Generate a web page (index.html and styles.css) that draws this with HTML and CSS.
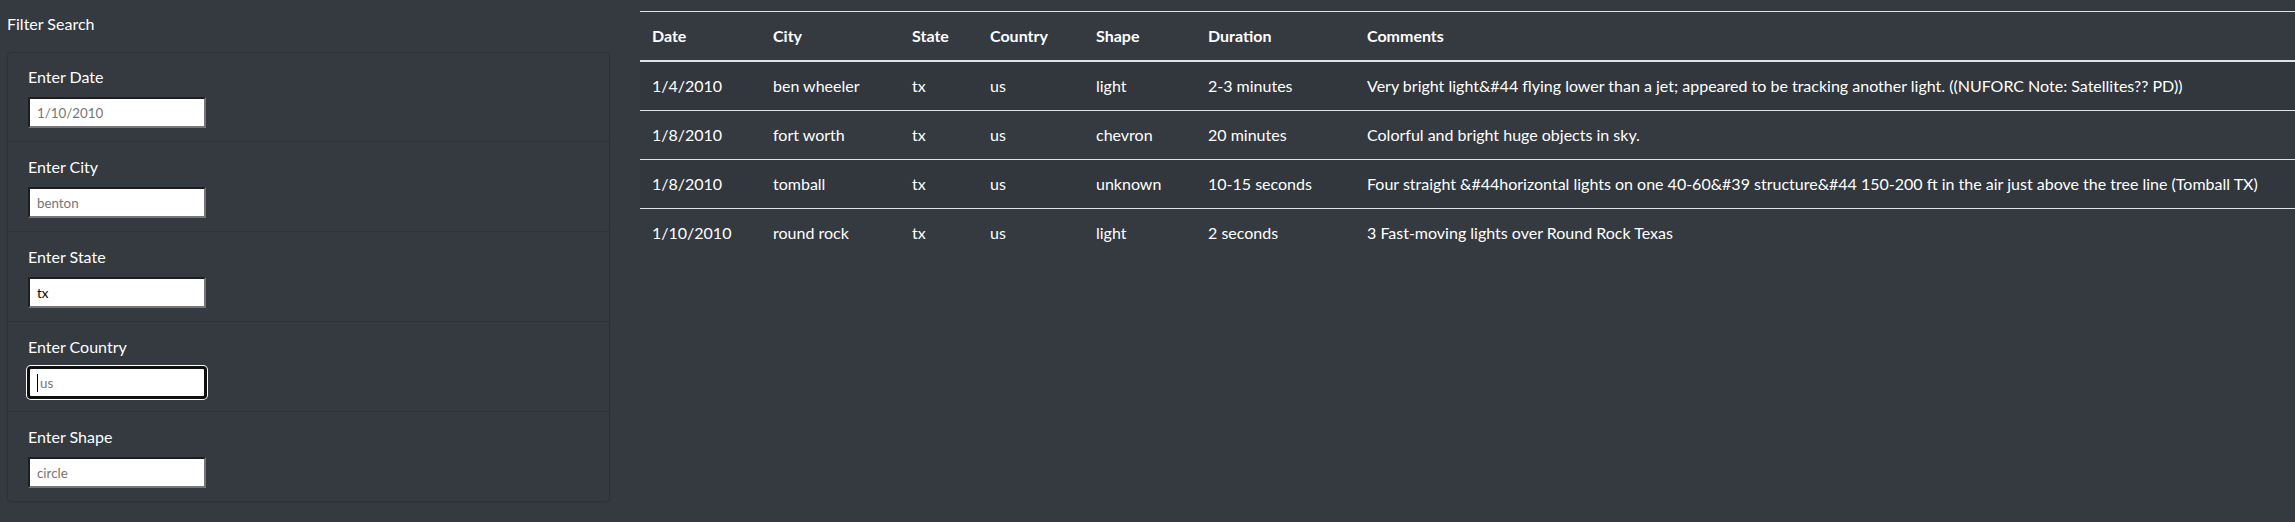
FILE: index.html
```html
<!DOCTYPE html>
<html lang="en">
<head>
<meta charset="utf-8">
<title>UFO Sightings</title>
<link rel="stylesheet" href="styles.css">
</head>
<body>
<div class="page">
  <aside class="filters">
    <div class="filters-title">Filter Search</div>
    <div class="card">
      <ul class="filter-list">
        <li class="filter-item">
          <label class="filter-label" for="datetime">Enter Date</label>
          <input class="filter-input" id="datetime" type="text" placeholder="1/10/2010">
        </li>
        <li class="filter-item">
          <label class="filter-label" for="city">Enter City</label>
          <input class="filter-input" id="city" type="text" placeholder="benton">
        </li>
        <li class="filter-item">
          <label class="filter-label" for="state">Enter State</label>
          <input class="filter-input" id="state" type="text" placeholder="ca" value="tx">
        </li>
        <li class="filter-item">
          <label class="filter-label" for="country">Enter Country</label>
          <span class="input-wrap">
            <input class="filter-input is-focused" id="country" type="text" placeholder="us">
            <span class="caret"></span>
          </span>
        </li>
        <li class="filter-item">
          <label class="filter-label" for="shape">Enter Shape</label>
          <input class="filter-input" id="shape" type="text" placeholder="circle">
        </li>
      </ul>
    </div>
  </aside>
  <main class="results">
    <table class="ufo-table">
      <colgroup>
        <col class="c-date">
        <col class="c-city">
        <col class="c-state">
        <col class="c-country">
        <col class="c-shape">
        <col class="c-duration">
        <col class="c-comments">
      </colgroup>
      <thead>
        <tr>
          <th>Date</th>
          <th>City</th>
          <th>State</th>
          <th>Country</th>
          <th>Shape</th>
          <th>Duration</th>
          <th>Comments</th>
        </tr>
      </thead>
      <tbody>
        <tr>
          <td>1/4/2010</td>
          <td>ben wheeler</td>
          <td>tx</td>
          <td>us</td>
          <td>light</td>
          <td>2-3 minutes</td>
          <td>Very bright light&amp;#44 flying lower than a jet; appeared to be tracking another light. ((NUFORC Note: Satellites?? PD))</td>
        </tr>
        <tr>
          <td>1/8/2010</td>
          <td>fort worth</td>
          <td>tx</td>
          <td>us</td>
          <td>chevron</td>
          <td>20 minutes</td>
          <td>Colorful and bright huge objects in sky.</td>
        </tr>
        <tr>
          <td>1/8/2010</td>
          <td>tomball</td>
          <td>tx</td>
          <td>us</td>
          <td>unknown</td>
          <td>10-15 seconds</td>
          <td>Four straight &amp;#44horizontal lights on one 40-60&amp;#39 structure&amp;#44 150-200 ft in the air just above the tree line (Tomball TX)</td>
        </tr>
        <tr>
          <td>1/10/2010</td>
          <td>round rock</td>
          <td>tx</td>
          <td>us</td>
          <td>light</td>
          <td>2 seconds</td>
          <td>3 Fast-moving lights over Round Rock Texas</td>
        </tr>
      </tbody>
    </table>
  </main>
</div>
</body>
</html>
```

FILE: styles.css
```css
html, body {
  margin: 0;
  padding: 0;
}

body {
  background: #343a40;
  color: #ffffff;
  font-family: Lato, "Liberation Sans", sans-serif;
  font-size: 16px;
  line-height: 24px;
  overflow: hidden;
}

.page {
  display: grid;
  grid-template-columns: 603px 1fr;
  column-gap: 30px;
  padding-left: 7px;
  min-height: 522px;
  box-sizing: border-box;
}

/* ---------- filters ---------- */
.filters {
  padding-top: 12px;
}

.filters-title {
  line-height: 24px;
  margin-bottom: 16px;
}

.card {
  border: 1px solid #2c3136;
  border-radius: 4px;
  box-shadow: 0 1px 1px rgba(0, 0, 0, 0.08);
}

.filter-list {
  list-style: none;
  margin: 0;
  padding: 0;
}

.filter-item {
  display: flex;
  flex-direction: column;
  align-items: flex-start;
  padding: 13px 20px 13px 20px;
  border-top: 1px solid #2e3338;
}

.filter-item:first-child {
  border-top: 0;
  padding-top: 12px;
}

.filter-label {
  line-height: 24px;
  margin-bottom: 8px;
}

.filter-input {
  box-sizing: border-box;
  width: 178px;
  height: 31px;
  margin: 0;
  padding: 0 7px;
  background: #ffffff;
  color: #000000;
  font-family: "Segoe UI", Lato, "Liberation Sans", sans-serif;
  font-size: 13.333px;
  border-width: 2px;
  border-style: solid;
  border-color: #1e1e1e #767676 #767676 #1e1e1e;
  outline: none;
}

.filter-input::placeholder {
  color: #757575;
  opacity: 1;
}

.input-wrap {
  position: relative;
  display: inline-block;
}

.filter-input.is-focused {
  border-color: #101010;
  border-radius: 3px;
  box-shadow: 0 0 0 1px #101010, 0 0 0 2px #ffffff;
  padding-left: 10px;
}

.caret {
  position: absolute;
  left: 9px;
  top: 7px;
  width: 1px;
  height: 18px;
  background: #000000;
}

/* ---------- table ---------- */
.results {
  min-width: 0;
}

.ufo-table {
  width: 100%;
  margin-top: 11px;
  border-collapse: separate;
  border-spacing: 0;
  table-layout: fixed;
  color: #ffffff;
}

.c-date { width: 121px; }
.c-city { width: 139px; }
.c-state { width: 78px; }
.c-country { width: 106px; }
.c-shape { width: 112px; }
.c-duration { width: 159px; }

.ufo-table th,
.ufo-table td {
  padding: 12px;
  text-align: left;
  vertical-align: top;
  white-space: nowrap;
  line-height: 24px;
}

.ufo-table th {
  font-weight: 700;
  border-top: 1px solid #dee2e6;
  border-bottom: 2px solid #dee2e6;
}

.ufo-table td {
  border-bottom: 1px solid #dee2e6;
}

.ufo-table tbody tr:last-child td {
  border-bottom: 0;
}

.ufo-table tbody tr:nth-child(odd) td {
  background: rgba(0, 0, 0, 0.05);
}
```
